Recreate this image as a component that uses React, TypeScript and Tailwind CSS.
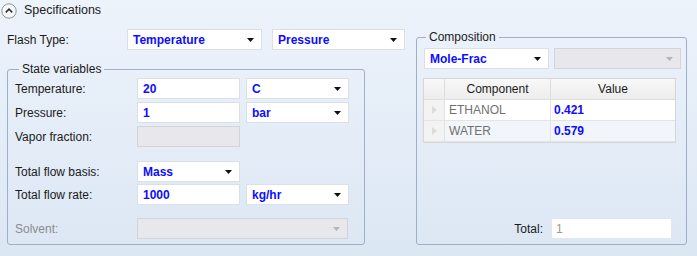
import React from "react";
import clsx from "clsx";

const Arrow = ({ disabled }: { disabled?: boolean }) => (
  <svg width="7" height="4" viewBox="0 0 7 4" className="shrink-0">
    <polygon points="0,0 7,0 3.5,4" fill={disabled ? "#b5b5b5" : "#111"} />
  </svg>
);

const Select = ({ value, className, disabled }: { value?: string; className: string; disabled?: boolean }) => (
  <div
    className={clsx(
      "h-[21px] shrink-0 flex items-center justify-between border pl-[5px] pr-[7px]",
      disabled ? "bg-[#e8e8ec] border-[#d4d4d8]" : "bg-white border-[#dcdfe4]",
      className
    )}
  >
    <span className="font-bold text-[#0d0dff]">{value}</span>
    <Arrow disabled={disabled} />
  </div>
);

const Input = ({ value, className, disabled }: { value?: string; className: string; disabled?: boolean }) => (
  <div
    className={clsx(
      "h-[21px] shrink-0 flex items-center border pl-[5px]",
      disabled ? "bg-[#e8e8ec] border-[#d4d4d8]" : "bg-white border-[#dcdfe4]",
      className
    )}
  >
    <span className="font-bold text-[#0d0dff]">{value}</span>
  </div>
);

const Row = ({ label, children, muted }: { label: string; children: React.ReactNode; muted?: boolean }) => (
  <div className="flex items-center h-[21px]">
    <span className={clsx("w-[122px] shrink-0", muted ? "text-[#8c8c8c]" : "text-[#1b1b1b]")}>{label}</span>
    <div className="flex gap-[6px]">{children}</div>
  </div>
);

const RowHeader = () => (
  <div className="w-[21px] shrink-0 bg-[#f3f3f3] border-r border-[#e2e2e2] flex items-center justify-center">
    <svg width="5" height="8" viewBox="0 0 5 8">
      <polygon points="0,0 5,4 0,8" fill="#dcdcdc" />
    </svg>
  </div>
);

export default function App() {
  return (
    <div
      className="w-[697px] h-[256px] overflow-hidden bg-gradient-to-b from-[#edf3fb] to-[#dce7f4] text-[12px] leading-[16px] text-[#1b1b1b]"
      style={{ fontFamily: '"Liberation Sans", Arial, sans-serif' }}
    >
      {/* header */}
      <div className="h-[20px] flex items-center pl-px">
        <svg width="16" height="16" viewBox="0 0 16 16" className="mt-[1px]">
          <circle cx="8" cy="8" r="7.2" fill="#f6f8fb" stroke="#8e9399" strokeWidth="1" />
          <polyline points="4.8,9.4 8,6.2 11.2,9.4" fill="none" stroke="#333" strokeWidth="1.6" />
        </svg>
        <span className="ml-[7px] text-[12.5px]">Specifications</span>
      </div>

      <div className="flex pl-[7px] pt-[9px] gap-[51px]">
        {/* left column */}
        <div className="w-[358px] shrink-0 flex flex-col">
          <div className="flex items-center h-[21px]">
            <span className="w-[120px] shrink-0">Flash Type:</span>
            <Select value="Temperature" className="w-[135px]" />
            <Select value="Pressure" className="w-[133px] ml-[10px]" />
          </div>

          <fieldset className="mt-[11px] h-[184px] border border-[#9db0c8] rounded-[3px] pl-[7px] flex flex-col">
            <legend className="ml-[4px] px-[3px] leading-[16px]">State variables</legend>
            <div className="mt-[1px] flex flex-col gap-[3px]">
              <Row label="Temperature:">
                <Input value="20" className="w-[103px]" />
                <Select value="C" className="w-[103px]" />
              </Row>
              <Row label="Pressure:">
                <Input value="1" className="w-[103px]" />
                <Select value="bar" className="w-[103px]" />
              </Row>
              <Row label="Vapor fraction:">
                <Input disabled className="w-[103px]" />
              </Row>
            </div>
            <div className="mt-[14px] flex flex-col gap-[2px]">
              <Row label="Total flow basis:">
                <Select value="Mass" className="w-[103px]" />
              </Row>
              <Row label="Total flow rate:">
                <Input value="1000" className="w-[103px]" />
                <Select value="kg/hr" className="w-[103px]" />
              </Row>
            </div>
            <div className="mt-[13px]">
              <Row label="Solvent:" muted>
                <Select disabled className="w-[211px]" />
              </Row>
            </div>
          </fieldset>
        </div>

        {/* right column */}
        <fieldset className="w-[269px] shrink-0 h-[216px] border border-[#9db0c8] rounded-[3px] pl-[6px] pr-[5px] flex flex-col">
          <legend className="ml-[3px] px-[3px] leading-[16px]">Composition</legend>
          <div className="mt-[3px] flex gap-[5px] pl-px">
            <Select value="Mole-Frac" className="w-[125px]" />
            <Select disabled className="w-[127px]" />
          </div>

          <div className="mt-[9px] w-[253px] border border-[#d6d6d6] bg-[#f3f3f3] flex flex-col">
            <div className="flex h-[21px] border-b border-[#dedede] bg-gradient-to-b from-[#f8f8f8] to-[#ededed]">
              <div className="w-[21px] shrink-0 border-r border-[#dedede]" />
              <div className="w-[106px] shrink-0 border-r border-[#dedede] flex items-center justify-center">Component</div>
              <div className="flex-1 flex items-center justify-center">Value</div>
            </div>
            {[
              { c: "ETHANOL", v: "0.421", bg: "bg-white" },
              { c: "WATER", v: "0.579", bg: "bg-[#f2f6fb]" },
            ].map((r) => (
              <div key={r.c} className="flex h-[21px] border-b border-[#e4e4e4]">
                <RowHeader />
                <div className={clsx("w-[106px] shrink-0 border-r border-[#e4e4e4] flex items-center pl-[4px] text-[#707070]", r.bg)}>
                  {r.c}
                </div>
                <div className={clsx("flex-1 flex items-center pl-[3px] font-bold text-[#0d0dff]", r.bg)}>{r.v}</div>
              </div>
            ))}
          </div>

          <div className="mt-auto mb-[5px] flex items-center justify-end pr-[9px]">
            <span className="mr-[8px]">Total:</span>
            <div className="w-[121px] h-[21px] bg-white border border-[#e4e6ea] flex items-center pl-[4px] text-[#9a9a9a]">1</div>
          </div>
        </fieldset>
      </div>
    </div>
  );
}
